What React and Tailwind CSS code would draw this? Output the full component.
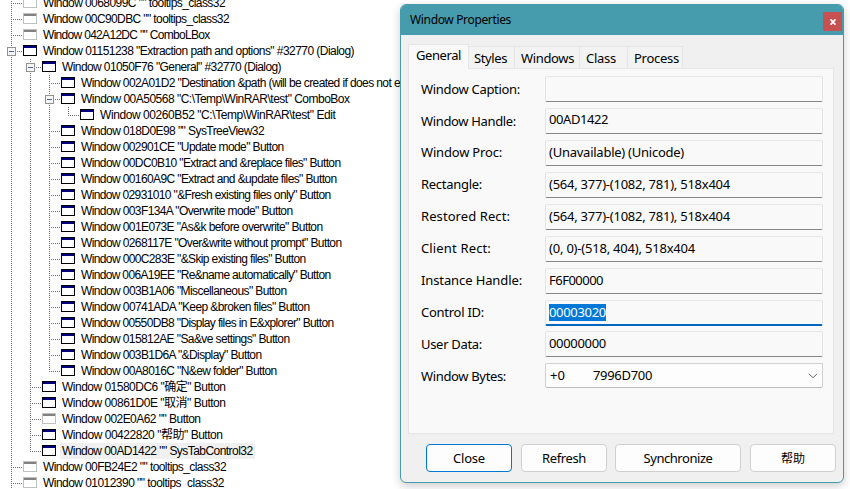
import { useLayoutEffect, useRef } from "react";

// Text whose tracking is adjusted so the line takes exactly `width` pixels.
function Fit({ width, className = "", children }) {
  const ref = useRef(null);
  useLayoutEffect(() => {
    const el = ref.current;
    el.style.letterSpacing = "0px";
    const natural = el.getBoundingClientRect().width;
    el.style.letterSpacing = (width - natural) / children.length + "px";
  }, [width, children]);
  return (
    <span className={"whitespace-pre " + className}>
      <span ref={ref}>{children}</span>
    </span>
  );
}

// depth, text, right edge, options (g: grey icon, o: expander, e: last child, s: selected)
const rows = [
  [0, 'Window 0068099C "" tooltips_class32', 225, "g"],
  [0, 'Window 00C90DBC "" tooltips_class32', 229, "g"],
  [0, 'Window 042A12DC "" ComboLBox', 209.5, "g"],
  [0, 'Window 01151238 "Extraction path and options" #32770 (Dialog)', 354, "o"],
  [1, 'Window 01050F76 "General" #32770 (Dialog)', 281, "o"],
  [2, 'Window 002A01D2 "Destination &path (will be created if does not e', 400, ""],
  [2, 'Window 00A50568 "C:\\Temp\\WinRAR\\test" ComboBox', 349.5, "o"],
  [3, 'Window 00260B52 "C:\\Temp\\WinRAR\\test" Edit', 335.5, "e"],
  [2, 'Window 018D0E98 "" SysTreeView32', 264, ""],
  [2, 'Window 002901CE "Update mode" Button', 283.5, ""],
  [2, 'Window 00DC0B10 "Extract and &replace files" Button', 340.5, ""],
  [2, 'Window 00160A9C "Extract and &update files" Button', 336.5, ""],
  [2, 'Window 02931010 "&Fresh existing files only" Button', 330.5, ""],
  [2, 'Window 003F134A "Overwrite mode" Button', 292.5, ""],
  [2, 'Window 001E073E "As&k before overwrite" Button', 322.5, ""],
  [2, 'Window 0268117E "Over&write without prompt" Button', 341.5, ""],
  [2, 'Window 000C283E "&Skip existing files" Button', 305.5, ""],
  [2, 'Window 006A19EE "Re&name automatically" Button', 330.5, ""],
  [2, 'Window 003B1A06 "Miscellaneous" Button', 286.5, ""],
  [2, 'Window 00741ADA "Keep &broken files" Button', 309.5, ""],
  [2, 'Window 00550DB8 "Display files in E&xplorer" Button', 333.5, ""],
  [2, 'Window 015812AE "Sa&ve settings" Button', 289.5, ""],
  [2, 'Window 003B1D6A "&Display" Button', 261.5, ""],
  [2, 'Window 00A8016C "N&ew folder" Button', 276.5, "e"],
  [1, 'Window 01580DC6 "确定" Button', 225.5, ""],
  [1, 'Window 00861D0E "取消" Button', 225.5, ""],
  [1, 'Window 002E0A62 "" Button', 200.5, "g"],
  [1, 'Window 00422820 "帮助" Button', 222.5, ""],
  [1, 'Window 00AD1422 "" SysTabControl32', 252.5, "es"],
  [0, 'Window 00FB24E2 "" tooltips_class32', 226, "g"],
  [0, 'Window 01012390 "" tooltips_class32', 224, "g"],
];

function Guides({ depth, flags }) {
  const x = 11 + depth * 19;
  return (
    <svg width={23 + depth * 19} height="16" className="shrink-0" shapeRendering="crispEdges">
      <g stroke="#707070" strokeDasharray="1 1">
        {Array.from({ length: depth }, (_, d) => d).map((d) => (
          <path key={d} d={`M${11.5 + d * 19} 0V16`} />
        ))}
        <path d={`M${x + 0.5} 0V${flags.includes("e") ? 9 : 16}`} />
        <path d={`M${x + 2} 8.5H${x + 12}`} />
      </g>
      {flags.includes("o") && (
        <g>
          <rect x={x - 3.5} y="4.5" width="8" height="8" fill="#f6f6f6" stroke="#919191" />
          <path d={`M${x - 2} 8.5H${x + 3}`} stroke="#4b63a7" />
        </g>
      )}
    </svg>
  );
}

function TreeIcon({ grey }) {
  return (
    <svg width="14" height="16" className="shrink-0" shapeRendering="crispEdges">
      <rect x="0.5" y="2.5" width="13" height="10" fill="#fff" stroke={grey ? "#c0c0c0" : "#000"} />
      <rect x="1" y="3" width="12" height="2" fill={grey ? "#808080" : "#000080"} />
    </svg>
  );
}

const tabs = [
  ["Styles", "w-[46px] pl-[5px]", 33],
  ["Windows", "w-[65px] pl-1.5", 53],
  ["Class", "w-12 pl-1.5", 30],
  ["Process", "w-[55px] pl-1.5", 45],
];

// label, label width, value, value width, label offset, field offset
const fields = [
  ["Window Caption:", 99, "", 0, "pt-[5px]", "pt-[2px]"],
  ["Window Handle:", 95, "00AD1422", 59, "pt-[5px]", "pt-[2px]"],
  ["Window Proc:", 81, "(Unavailable) (Unicode)", 135, "pt-1", "pt-[3px]"],
  ["Rectangle:", 61, "(564, 377)-(1082, 781), 518x404", 181, "pt-1", "pt-[3px]"],
  ["Restored Rect:", 89, "(564, 377)-(1082, 781), 518x404", 181, "pt-1", "pt-[3px]"],
  ["Client Rect:", 70, "(0, 0)-(518, 404), 518x404", 146, "pt-1", "pt-[3px]"],
  ["Instance Handle:", 101, "F6F00000", 54, "pt-1", "pt-[3px]"],
  ["Control ID:", 63, "00003020", 57, "pt-1", "pt-[3px]"],
  ["User Data:", 61, "00000000", 57, "pt-1", "-mt-px pt-[3px]"],
];

function DialogButton({ label, width, className }) {
  return (
    <button className={"flex h-7 items-center justify-center rounded border bg-[#fdfdfd] " + className}>
      <Fit width={width}>{label}</Fit>
    </button>
  );
}

export default function App() {
  return (
    <div className="relative h-[489px] w-[850px] overflow-hidden bg-white text-black">
      <div className="-mt-[5px] flex w-[401px] flex-col overflow-hidden font-['Liberation_Sans','Noto_Sans_CJK_SC',sans-serif] text-[12px] leading-4">
        {rows.map(([depth, text, right, flags]) => (
          <div key={text} className="flex h-4 shrink-0">
            <Guides depth={depth} flags={flags} />
            <TreeIcon grey={flags.includes("g")} />
            <div className={"ml-1 h-4 shrink-0 pr-0.5 pl-0.5 " + (flags.includes("s") ? "bg-[#f0f0f0]" : "")}>
              <Fit width={right - 43 - depth * 19} className="block h-4">
                {text}
              </Fit>
            </div>
          </div>
        ))}
      </div>

      <div className="absolute top-1 left-[400px] flex h-[479px] w-[444px] flex-col overflow-hidden rounded-md border border-[#469bac] bg-[#f0f0f0] font-['Noto_Sans','Noto_Sans_CJK_SC',sans-serif] text-[13px] leading-4 shadow-[0_3px_10px_rgba(0,0,0,0.2)]">
        <div className="flex h-[30px] shrink-0 justify-between bg-[#469bac] pr-px pl-[9px]">
          <Fit width={101} className="pt-[7px] text-[12px]">Window Properties</Fit>
          <div className="mt-[7px] flex h-[19px] w-[19px] items-center justify-center bg-[#c75050]">
            <svg width="6" height="6" viewBox="0 0 6 6" stroke="#fff" strokeWidth="1.7">
              <path d="M0.6 0.3 5.4 5.7M5.4 0.3 0.6 5.7" />
            </svg>
          </div>
        </div>
        <div className="mt-[9px] ml-[7px] flex h-6 shrink-0 items-end">
          <div className="z-10 -mb-px h-[25px] w-[61px] border border-b-0 border-[#e5e5e5] bg-[#f9f9f9] pt-[2px] pl-[7px]">
            <Fit width={45}>General</Fit>
          </div>
          {tabs.map(([label, cls, w]) => (
            <div key={label} className={"h-[22px] border-t border-r border-[#e5e5e5] bg-[#f3f3f3] pt-[3px] " + cls}>
              <Fit width={w}>{label}</Fit>
            </div>
          ))}
        </div>
        <div className="ml-[7px] flex h-[366px] w-[426px] shrink-0 flex-col gap-[5px] border border-[#e5e5e5] bg-[#f9f9f9] pt-[7px] pr-[10px] pl-3">
          {fields.map(([label, lw, value, vw, labelPad, fieldPad]) => (
            <div key={label} className="flex h-[27px] shrink-0">
              <div className={"w-[124px] " + labelPad}>
                <Fit width={lw}>{label}</Fit>
              </div>
              <div
                className={
                  "h-[26px] w-[278px] rounded-xs border border-[#e5e5e5] pl-[3px] " +
                  fieldPad +
                  (label === "Control ID:" ? " border-b-2 border-b-[#0067c0]" : " border-b-[#868686]")
                }
              >
                {value && (
                  <Fit width={vw} className={label === "Control ID:" ? "inline-block h-[17px] bg-[#0078d7] text-white" : ""}>
                    {value}
                  </Fit>
                )}
              </div>
            </div>
          ))}
          <div className="-mt-px flex h-[27px] shrink-0">
            <div className="w-[124px] pt-[5px]">
              <Fit width={85}>Window Bytes:</Fit>
            </div>
            <div className="flex h-[25px] w-[278px] rounded-xs border border-[#d0d0d0] border-b-[#bdbdbd] bg-[#fdfdfd] pt-[3px] pr-1 pl-1">
              <Fit width={15} className="w-[43px]">+0</Fit>
              <Fit width={59}>7996D700</Fit>
              <svg width="10" height="6" viewBox="0 0 10 6" className="mt-[6px] ml-auto" fill="none" stroke="#5d5d5d">
                <path d="M1 0.8 5 4.8 9 0.8" />
              </svg>
            </div>
          </div>
        </div>
        <div className="mt-[10px] ml-[25px] flex">
          <DialogButton label="Close" width={32} className="mr-[9px] w-[86px] border-[#0078d4]" />
          <DialogButton label="Refresh" width={44} className="mr-2 w-[86px] border-[#d0d0d0]" />
          <DialogButton label="Synchronize" width={69} className="mr-[9px] w-[126px] border-[#d0d0d0]" />
          <DialogButton label="帮助" width={24} className="w-[86px] border-[#d0d0d0] pt-px text-[12px]" />
        </div>
      </div>
    </div>
  );
}
